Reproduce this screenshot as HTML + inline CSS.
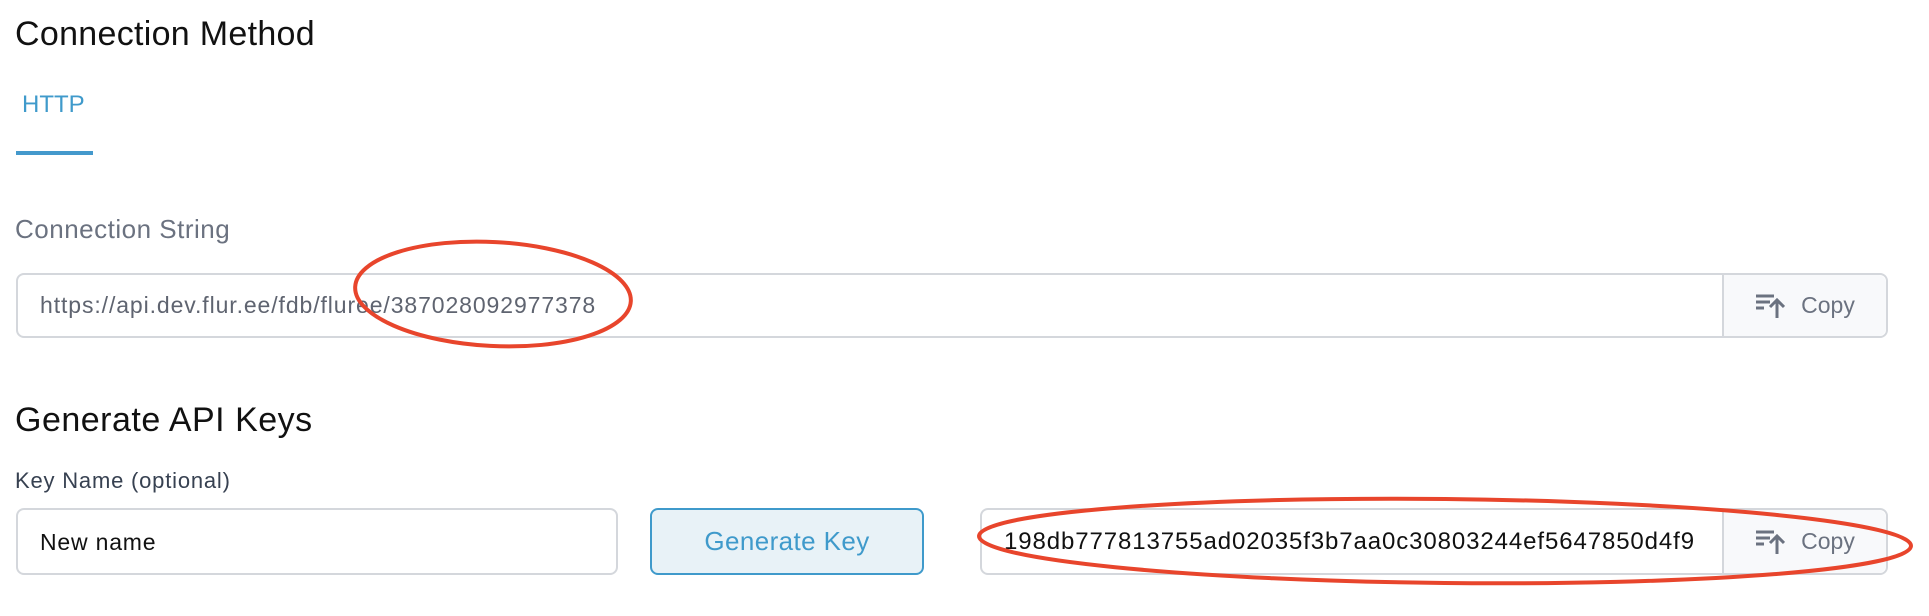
<!DOCTYPE html>
<html><head><style>
body{margin:0;width:1929px;height:616px;background:#fff;font-family:"Liberation Sans",sans-serif;position:relative;overflow:hidden}
.a{position:absolute;white-space:nowrap}
.box{position:absolute;border:2px solid #d4d7dc;border-radius:8px;box-sizing:border-box;background:#fff}
.copy{position:absolute;top:0;bottom:0;right:0;width:162px;border-left:2px solid #d4d7dc;background:#f8f9fb;border-radius:0 8px 8px 0;color:#6b7280;font-size:23px;display:flex;align-items:center;justify-content:center;gap:16px}
</style></head><body>
<div class="a" style="left:15px;top:15px;font-size:34px;color:#111;letter-spacing:0.3px">Connection Method</div>
<div class="a" style="left:22px;top:91px;font-size:24px;color:#3f9acb">HTTP</div>
<div class="a" style="left:16px;top:151px;width:77px;height:4px;background:#4499cc"></div>
<div class="a" style="left:15px;top:214px;font-size:26px;color:#6b7280;letter-spacing:0.5px">Connection String</div>
<div class="box" style="left:16px;top:273px;width:1872px;height:65px">
<div class="a" style="left:22px;top:17px;font-size:23px;color:#5f6470;letter-spacing:0.9px">https://api.dev.flur.ee/fdb/fluree/387028092977378</div>
<div class="copy"><svg width="30" height="28" viewBox="0 0 30 28"><path d="M1 4h18M1 10h14M1 16h8M22 26V8M15 15l7-7 7 7" stroke="#6b7280" stroke-width="3" fill="none"/></svg>Copy</div></div>
<div class="a" style="left:15px;top:401px;font-size:34px;color:#111;letter-spacing:0.5px">Generate API Keys</div>
<div class="a" style="left:15px;top:468px;font-size:22px;color:#374151;letter-spacing:0.8px">Key Name (optional)</div>
<div class="box" style="left:16px;top:508px;width:602px;height:67px">
<div class="a" style="left:22px;top:19px;font-size:23px;color:#111;letter-spacing:0.8px">New name</div></div>
<div class="box" style="left:650px;top:508px;width:274px;height:67px;background:#e8f2f7;border-color:#3f9acb;color:#3f9acb;font-size:26px;letter-spacing:0.4px;display:flex;align-items:center;justify-content:center">Generate Key</div>
<div class="box" style="left:980px;top:508px;width:908px;height:67px;overflow:hidden">
<div class="a" style="left:22px;top:18px;font-size:24px;color:#111;width:700px;overflow:hidden;letter-spacing:0.9px">198db777813755ad02035f3b7aa0c30803244ef5647850d4f9</div>
<div class="copy"><svg width="30" height="28" viewBox="0 0 30 28"><path d="M1 4h18M1 10h14M1 16h8M22 26V8M15 15l7-7 7 7" stroke="#6b7280" stroke-width="3" fill="none"/></svg>Copy</div></div>
<svg class="a" style="left:0;top:0" width="1929" height="616"><g fill="none" stroke="#e8452c" stroke-width="4">
<ellipse cx="493" cy="294" rx="138" ry="52" transform="rotate(3 493 294)"/>
<ellipse cx="1445" cy="541" rx="466" ry="42" transform="rotate(0.6 1445 541)"/></g></svg>
</body></html>
